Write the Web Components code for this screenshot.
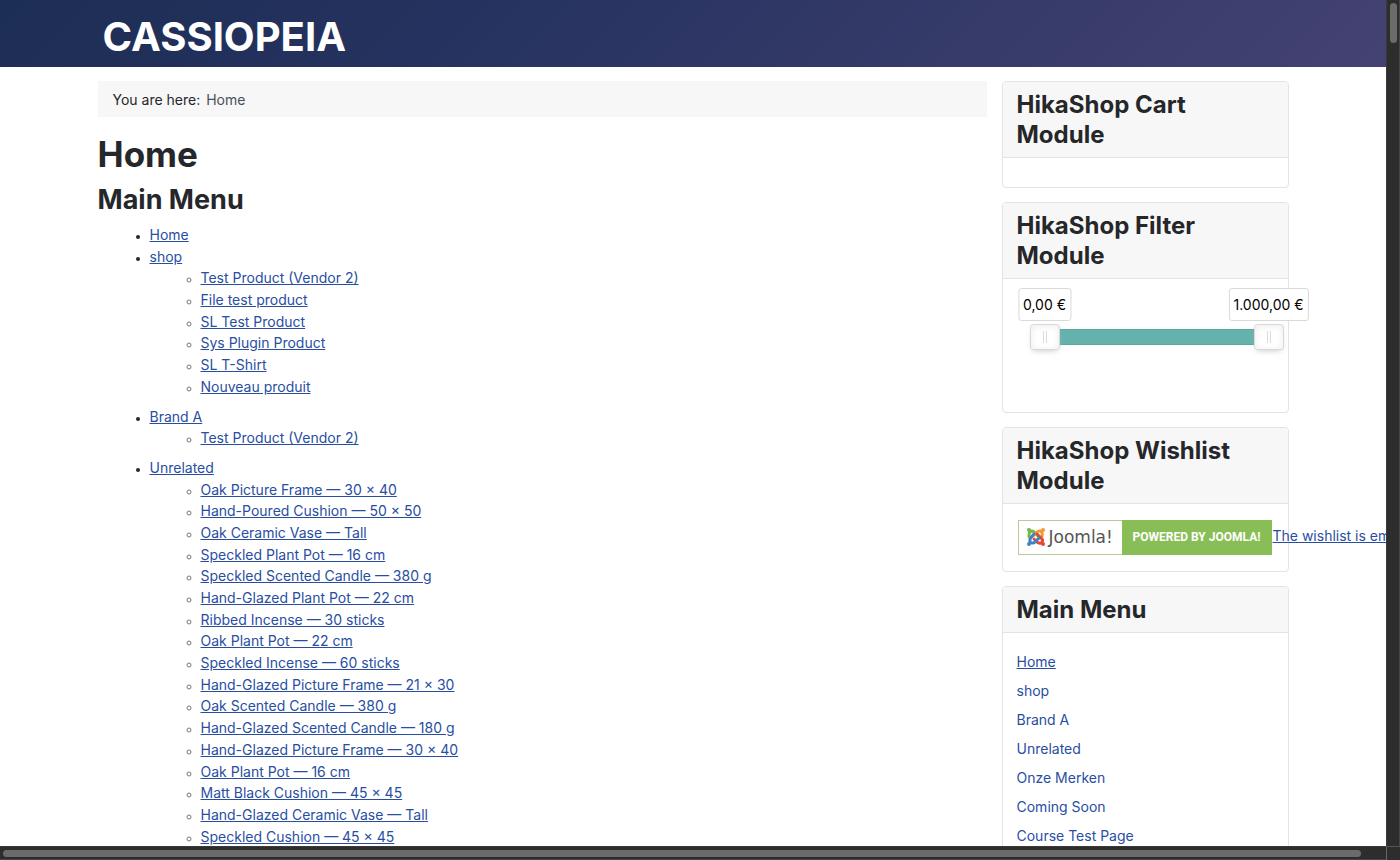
<!DOCTYPE html>
<html lang="en">
<head>
<meta charset="utf-8">
<title>Home</title>
<style>
html, body { margin: 0; height: 100%; }
body { font: 14px/1.55 Inter, "Liberation Sans", sans-serif; color: #25272a; background: #fff; overflow: hidden; --link: #284ea2; }
</style>
</head>
<body>
<scroll-frame>
  <site-header></site-header>
  <page-layout>
    <bread-crumbs></bread-crumbs>
    <page-title>Home</page-title>
    <site-map></site-map>
    <side-card slot="side" heading="HikaShop Cart Module"></side-card>
    <side-card slot="side" heading="HikaShop Filter Module"><price-filter></price-filter></side-card>
    <side-card slot="side" heading="HikaShop Wishlist Module"><wish-list></wish-list></side-card>
    <side-card slot="side" heading="Main Menu"><side-menu></side-menu></side-card>
  </page-layout>
</scroll-frame>
<script>
const define = (name, html, setup) => customElements.define(name, class extends HTMLElement {
  connectedCallback() {
    if (this.shadowRoot) return;
    this.attachShadow({ mode: 'open' }).innerHTML = html;
    if (setup) setup(this);
  }
});

define('scroll-frame', `
<style>
:host { display: grid; grid-template: minmax(0, 1fr) 14px / minmax(0, 1fr) 14px; height: 100vh; background: #2d2d2d; }
.view { overflow: hidden; background: #fff; }
.bar { display: flex; box-sizing: border-box; background: #2d2d2d; }
.v { padding: 3px 2px 3px 3px; border-left: 1px solid #3a3a3a; border-right: 1px solid #454545; }
.h { padding: 3px 25px 2px 3px; border-top: 1px solid #3a3a3a; border-bottom: 1px solid #454545; }
.thumb { border-radius: 4px; background: #6b6b6b; }
.v .thumb { width: 100%; height: 40px; }
.h .thumb { width: 100%; }
.corner { border-left: 1px solid #666; border-top: 1px solid #555; }
</style>
<div class="view"><slot></slot></div>
<div class="bar v"><div class="thumb"></div></div>
<div class="bar h"><div class="thumb"></div></div>
<div class="corner"></div>`);

define('site-header', `
<style>
:host { display: block; background: linear-gradient(135deg, #1d2e54 0%, #25325f 33%, #444272 100%); }
.inner { box-sizing: border-box; max-width: 1191px; height: 67px; margin: 0 auto; padding: 7px 5px 0; }
a { display: inline-block; font: 700 40px/60px Inter, sans-serif; color: #fff; text-decoration: none; }
</style>
<header class="inner"><a href="#">CASSIOPEIA</a></header>`);

define('page-layout', `
<style>
:host { display: grid; grid-template-columns: minmax(0, 1fr) 287px; gap: 15px; max-width: 1191px; margin: 14px auto 0; }
main { min-width: 0; }
aside { display: flex; flex-direction: column; gap: 14px; min-width: 0; }
</style>
<main><slot></slot></main>
<aside><slot name="side"></slot></aside>`);

define('bread-crumbs', `
<style>
:host { display: block; }
nav { display: flex; gap: 6px; padding: 2px 15px 0; line-height: 34px; background: #f7f7f7; }
.current { color: #495057; }
</style>
<nav aria-label="Breadcrumbs"><span>You are here:</span><span class="current">Home</span></nav>`);

define('page-title', `
<style>
:host { display: block; }
h1 { margin: 16px 0 0; font-size: 35px; line-height: 42px; }
</style>
<h1><slot></slot></h1>`);

define('site-map', `
<style>
:host { display: block; }
h2 { margin: 8px 0 7px; font-size: 27px; line-height: 34px; }
ul { margin: 0; padding-left: 52px; }
ul ul { margin-bottom: 8px; padding-left: 51px; }
li::marker { font-size: 11px; }
ul ul li::marker { color: #777; }
a { color: var(--link); text-decoration: underline; }
</style>
<h2>Main Menu</h2>
<ul class="root"></ul>`, el => {
  const tree = [
    ['Home'],
    ['shop', ['Test Product (Vendor 2)', 'File test product', 'SL Test Product', 'Sys Plugin Product', 'SL T-Shirt', 'Nouveau produit']],
    ['Brand A', ['Test Product (Vendor 2)']],
    ['Unrelated', ['Oak Picture Frame — 30 × 40', 'Hand-Poured Cushion — 50 × 50', 'Oak Ceramic Vase — Tall',
      'Speckled Plant Pot — 16 cm', 'Speckled Scented Candle — 380 g', 'Hand-Glazed Plant Pot — 22 cm',
      'Ribbed Incense — 30 sticks', 'Oak Plant Pot — 22 cm', 'Speckled Incense — 60 sticks',
      'Hand-Glazed Picture Frame — 21 × 30', 'Oak Scented Candle — 380 g', 'Hand-Glazed Scented Candle — 180 g',
      'Hand-Glazed Picture Frame — 30 × 40', 'Oak Plant Pot — 16 cm', 'Matt Black Cushion — 45 × 45',
      'Hand-Glazed Ceramic Vase — Tall', 'Speckled Cushion — 45 × 45']]
  ];
  const link = t => `<a href="#">${t}</a>`;
  el.shadowRoot.querySelector('.root').innerHTML = tree.map(([t, kids]) =>
    `<li>${link(t)}${kids ? `<ul>${kids.map(k => `<li>${link(k)}</li>`).join('')}</ul>` : ''}</li>`).join('');
});

define('side-card', `
<style>
:host { display: block; border: 1px solid #e2e3e4; border-radius: 4px; background: #fff; }
h3 { margin: 0; padding: 8px 14px 7px; font-size: 24px; line-height: 30px; background: #f7f7f7; border-bottom: 1px solid #e2e3e4; border-radius: 3px 3px 0 0; }
.body { padding: 14px 14px 15px; }
</style>
<h3></h3><div class="body"><slot></slot></div>`, el => {
  el.shadowRoot.querySelector('h3').textContent = el.getAttribute('heading');
});

define('price-filter', `
<style>
:host { display: block; height: 73px; padding-top: 31px; }
.slider { position: relative; width: 254px; height: 26px; margin-left: 13px; }
.track { position: absolute; inset: 5px 15px; border: 1px solid #5ba8a1; box-sizing: border-box; background: #63b3ac; }
input { position: absolute; inset: 0; width: 100%; height: 26px; margin: 0; appearance: none; background: none; pointer-events: none; }
input::-webkit-slider-thumb { appearance: none; box-sizing: border-box; width: 30px; height: 26px; border: 1px solid #d9d9d9; border-radius: 3px; pointer-events: auto;
  background: linear-gradient(#dcdcdc, #dcdcdc) 12px 6px / 1px 12px no-repeat, linear-gradient(#dcdcdc, #dcdcdc) 15px 6px / 1px 12px no-repeat, #fff;
  box-shadow: inset 0 0 1px #fff, inset 0 1px 7px #ebebeb, 0 3px 6px -3px #bbb; }
output { position: absolute; bottom: 29px; padding: 5px 4px; border: 1px solid #d9d9d9; border-radius: 3px; background: #fff; color: #000; line-height: 21px; white-space: nowrap; transform: translateX(-50%); }
.low { left: 15px; }
.high { left: 239px; }
</style>
<div class="slider">
  <div class="track"></div>
  <input id="low" type="range" min="0" max="1000" value="0" aria-label="Lowest price">
  <input id="high" type="range" min="0" max="1000" value="1000" aria-label="Highest price">
  <output class="low" for="low">0,00 €</output>
  <output class="high" for="high">1.000,00 €</output>
</div>`);

define('wish-list', `
<style>
:host { display: flex; align-items: center; gap: 1px; height: 38px; white-space: nowrap; }
.badge { display: flex; flex: none; box-sizing: border-box; width: 254px; height: 35px; margin-left: 1px; border: 1px solid #b5cc97; text-decoration: none; }
.brand { display: flex; align-items: center; gap: 3px; box-sizing: border-box; width: 104px; padding-left: 7px; background: #fff; font: 17px/33px "DejaVu Sans", sans-serif; color: #555; }
.brand svg { flex: none; }
.powered { flex: 1; margin: -1px; background: #89be57; color: #fff; font: 700 12px/35px Roboto, sans-serif; text-align: center; }
.note { color: var(--link); line-height: 20px; padding-bottom: 2px; }
</style>
<a class="badge" href="#"><span class="brand">
  <svg width="20" height="20" viewBox="0 0 20 20" fill="none" stroke-width="3" stroke-linecap="round" stroke-linejoin="round">
    <path d="M4 11C2 9 3 4 6 4C8 4 9 6 13 10" stroke="#78b548"/>
    <path d="M7 9L11 5C13 3 16 4 16 6C17 8 16 10 14 11" stroke="#f39a35"/>
    <path d="M11 7L15 11C18 13 16 17 13 16C11 16 10 14 8 12" stroke="#e34b35"/>
    <path d="M13 11L9 15C7 17 3 16 4 13C4 11 6 9 8 7" stroke="#3f82c4"/>
    <g stroke="none"><circle cx="3" cy="3" r="2" fill="#78b548"/><circle cx="17" cy="3" r="2" fill="#f39a35"/><circle cx="17" cy="17" r="2" fill="#e34b35"/><circle cx="3" cy="17" r="2" fill="#3f82c4"/></g>
  </svg><span>Joomla!</span></span><span class="powered">POWERED BY JOOMLA!</span></a>
<a class="note" href="#">The wishlist is empty</a>`);

define('side-menu', `
<style>
:host { display: block; }
ul { margin: 0; padding: 0 0 30px; list-style: none; line-height: 29px; }
a { color: var(--link); text-decoration: none; }
a.active { text-decoration: underline; }
</style>
<ul></ul>`, el => {
  el.shadowRoot.querySelector('ul').innerHTML =
    ['Home', 'shop', 'Brand A', 'Unrelated', 'Onze Merken', 'Coming Soon', 'Course Test Page']
      .map((t, i) => `<li><a href="#"${i ? '' : ' class="active"'}>${t}</a></li>`).join('');
});
</script>
</body>
</html>
